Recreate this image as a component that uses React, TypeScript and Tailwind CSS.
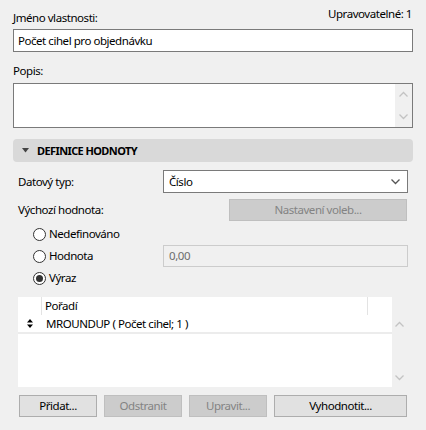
const font = { fontFamily: '"Noto Sans", "Open Sans", sans-serif' };

const Radio = ({ checked, label }: { checked?: boolean; label: string }) => (
  <div className="flex items-center gap-[3px]">
    <span className="flex h-[13px] w-[13px] items-center justify-center rounded-full border border-[#333] bg-white">
      {checked && <span className="h-[7px] w-[7px] rounded-full bg-[#333]" />}
    </span>
    <span>{label}</span>
  </div>
);

const Chevron = ({ up, className }: { up?: boolean; className?: string }) => (
  <svg width="9" height="6" viewBox="0 0 9 6" className={className}>
    <path
      d={up ? "M0.5 5.5 L4.5 1.5 L8.5 5.5" : "M0.5 0.5 L4.5 4.5 L8.5 0.5"}
      fill="none"
      stroke="currentColor"
      strokeWidth="1.3"
    />
  </svg>
);

const Button = ({ label, disabled, w }: { label: string; disabled?: boolean; w: string }) => (
  <button
    className={
      "flex h-[22px] items-center justify-center border " +
      w +
      (disabled
        ? " border-[#bfbfbf] bg-[#cccccc] text-[#838383]"
        : " border-[#adadad] bg-[#e1e1e1] text-black")
    }
  >
    {label}
  </button>
);

export default function App() {
  return (
    <div
      className="h-[430px] w-[426px] bg-[#f0f0f0] px-[13px] text-[11.5px] leading-none tracking-[-0.45px] text-black"
      style={font}
    >
      <div className="flex h-[29px] items-start justify-between">
        <span className="mt-[12px]">Jméno vlastnosti:</span>
        <span className="mr-px mt-[8px]">Upravovatelné: 1</span>
      </div>
      <div className="flex h-[23px] items-center border border-[#7a7a7a] bg-white px-[4px]">
        Počet cihel pro objednávku
      </div>

      <div className="flex h-[31px] items-start">
        <span className="mt-[13px]">Popis:</span>
      </div>
      <div className="flex h-[45px] justify-end border border-[#7a7a7a] bg-white">
        <div className="flex w-[17px] flex-col items-center justify-between bg-[#f0f0f0] py-[7px] text-[#c3c3c3]">
          <Chevron up />
          <Chevron />
        </div>
      </div>

      <div className="mt-[11px] flex h-[23px] items-center gap-[8px] rounded-[4px] bg-[#d9d9d9] pl-[9px] text-[11px] font-bold tracking-[-0.6px]">
        <svg width="7" height="5" viewBox="0 0 7 5">
          <path d="M0 0 L7 0 L3.5 4.5 Z" fill="#444" />
        </svg>
        <span>DEFINICE HODNOTY</span>
      </div>

      <div className="mt-[8px] flex h-[23px] items-center pl-[5px]">
        <span className="w-[145px]">Datový typ:</span>
        <div className="flex h-full w-[245px] items-center justify-between border border-[#7a7a7a] bg-white pl-[5px] pr-[7px]">
          <span>Číslo</span>
          <Chevron className="text-[#555]" />
        </div>
      </div>

      <div className="mt-[6px] flex h-[22px] items-center justify-between pl-[5px] pr-[6px]">
        <span>Výchozí hodnota:</span>
        <Button label="Nastavení voleb..." disabled w="w-[178px]" />
      </div>

      <div className="mt-[2px] flex flex-col pl-[20px]">
        <div className="flex h-[22px] items-center">
          <Radio label="Nedefinováno" />
        </div>
        <div className="flex h-[22px] items-center">
          <div className="w-[130px]">
            <Radio label="Hodnota" />
          </div>
          <div className="flex h-full w-[245px] items-center border border-[#cccccc] bg-[#f0f0f0] pl-[5px] text-[#6d6d6d]">
            0,00
          </div>
        </div>
        <div className="flex h-[22px] items-center">
          <Radio checked label="Výraz" />
        </div>
      </div>

      <div className="ml-[5px] mr-[6px] mt-[8px] flex h-[90px]">
        <div className="flex flex-1 flex-col bg-white">
          <div className="flex h-[18px] items-stretch">
            <div className="w-[24px] border-r border-[#e3e3e3]" />
            <div className="flex flex-1 items-center border-r border-[#e3e3e3] pl-[3px]">Pořadí</div>
            <div className="w-[24px]" />
          </div>
          <div className="flex h-[19px] items-center border-b-2 border-[#ececec]">
            <span className="flex w-[24px] justify-center">
              <svg width="6" height="9" viewBox="0 0 6 9">
                <path d="M0 3.5 L3 0 L6 3.5 Z M0 5.5 L3 9 L6 5.5 Z" fill="#000" />
              </svg>
            </span>
            <span className="pl-[4px]">MROUNDUP ( Počet cihel; 1 )</span>
          </div>
        </div>
        <div className="flex w-[15px] flex-col items-center justify-between pb-[6px] pt-[24px] text-[#c3c3c3]">
          <Chevron up />
          <Chevron />
        </div>
      </div>

      <div className="ml-[6px] mt-[8px] flex gap-[7px]">
        <Button label="Přidat..." w="w-[78px]" />
        <Button label="Odstranit" disabled w="w-[78px]" />
        <Button label="Upravit..." disabled w="w-[78px]" />
        <Button label="Vyhodnotit..." w="w-[133px]" />
      </div>
    </div>
  );
}
